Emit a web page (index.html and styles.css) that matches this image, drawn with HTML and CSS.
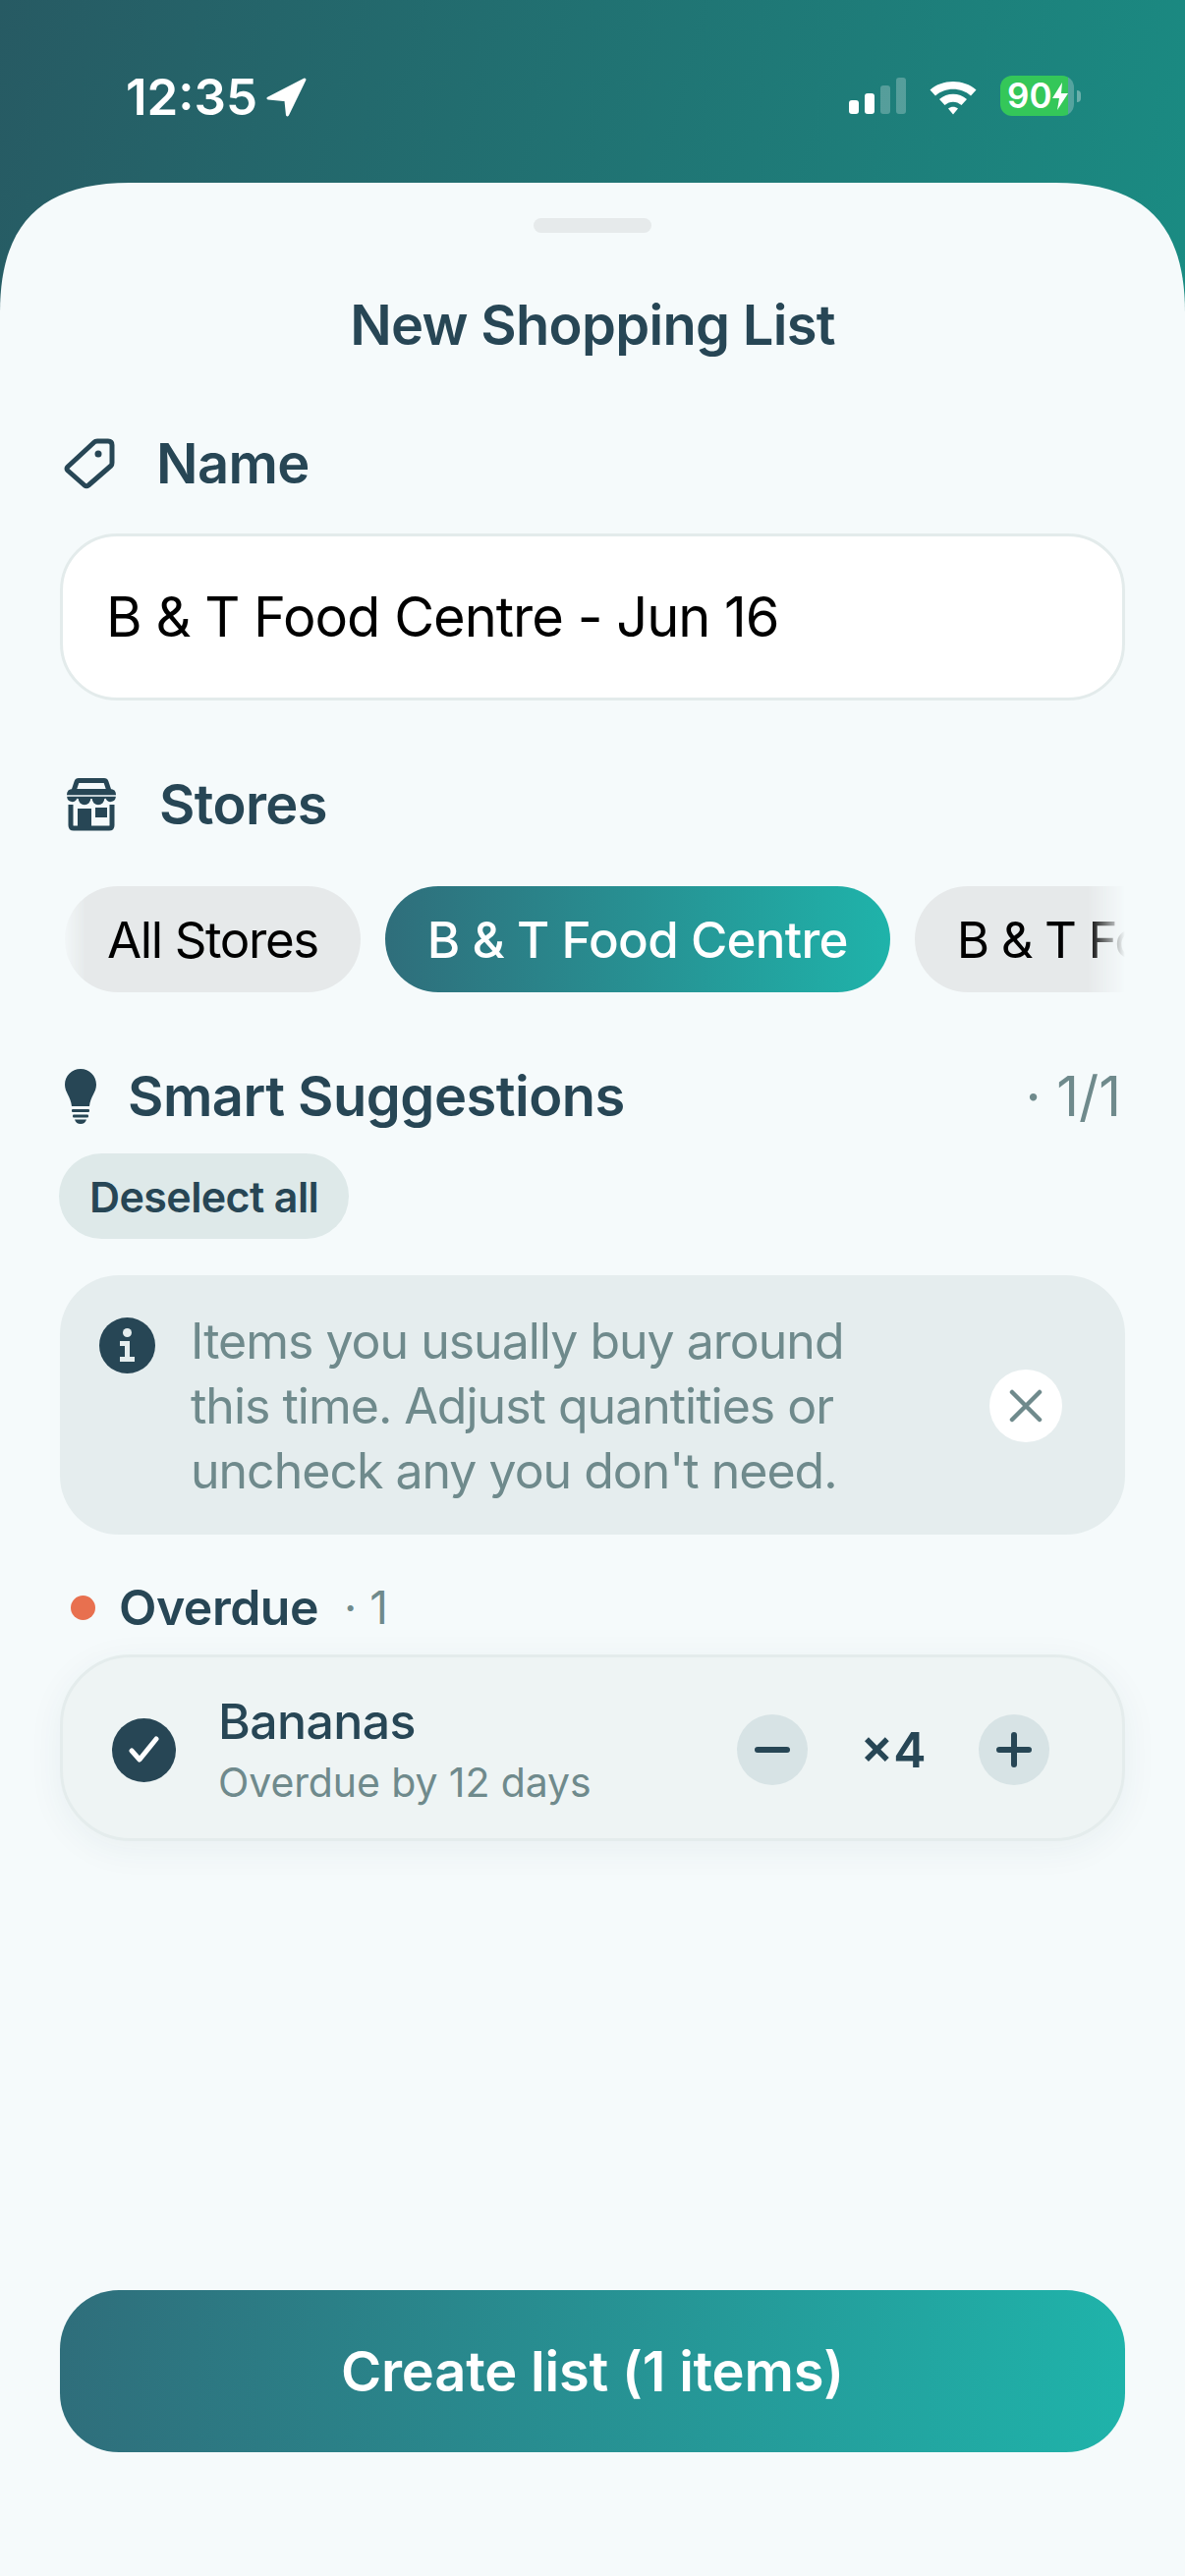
FILE: index.html
```html
<!DOCTYPE html>
<html lang="en">
  <head>
    <meta charset="UTF-8" />
    <meta name="viewport" content="width=device-width, initial-scale=1.0" />
    <title>New Shopping List</title>
    <link rel="stylesheet" href="styles.css">
  </head>
  <body>
    <div class="screen">
      <div class="status-bar">
        <div class="status-left">
          <span class="time">12:35</span>
          <svg class="location" viewBox="0 0 40 38"><path d="M37 2 2 20 19 21.500 20.500 36Z" fill="#fff" stroke="#fff" stroke-width="3" stroke-linejoin="round"/></svg>
        </div>
        <div class="status-right">
          <div class="signal">
            <span class="bar bar-1"></span>
            <span class="bar bar-2"></span>
            <span class="bar bar-3 off"></span>
            <span class="bar bar-4 off"></span>
          </div>
          <svg class="wifi" viewBox="0 0 50 38">
            <path d="M1.500 12.500C14 1 36 1 48.500 12.500L43 18.500C33.500 9.500 16.500 9.500 7 18.500Z" fill="#fff"/>
            <path d="M11 22C19 15 31 15 39 22L33.500 28C28.500 23.500 21.500 23.500 16.500 28Z" fill="#fff"/>
            <path d="M20 31.500C23 29 27 29 30 31.500L25 37.500Z" fill="#fff"/>
          </svg>
          <div class="battery">
            <div class="battery-body">
              <span class="battery-level">90</span>
              <svg class="bolt" viewBox="0 0 16 28"><path d="M10 0 0 16H7L5 28 16 11H9Z" fill="#fff"/></svg>
            </div>
            <span class="battery-tip"></span>
          </div>
        </div>
      </div>

      <div class="sheet">
        <div class="handle"></div>
        <h1 class="sheet-title">New Shopping List</h1>

        <div class="section-label name-label">
          <svg class="tag-icon" viewBox="0 0 56 56">
            <path d="M5 31 32 6Q33 5 35 5H46Q50 5 50 9V27Q50 29 49 30L26 50Q24 51.500 22 50L5 35Q3 33 5 31Z" fill="none" stroke="#274655" stroke-width="5" stroke-linejoin="round"/>
            <circle cx="36" cy="18" r="3.500" fill="#274655"/>
          </svg>
          <span>Name</span>
        </div>
        <div class="name-input">B &amp; T Food Centre - Jun 16</div>

        <div class="section-label stores-label">
          <svg class="store-icon" viewBox="0 0 54 54">
            <path d="M9 13 12 4Q12.500 2.500 14 2.500H40Q41.500 2.500 42 4L45 13" fill="none" stroke="#274655" stroke-width="5"/>
            <path d="M2 17Q2 11 8 11H46Q52 11 52 17V19H2Z" fill="#274655"/>
            <path d="M1.500 18H52.500V20A6 6 0 0 1 41 21 7 7 0 0 1 27 21 7 7 0 0 1 13 21 6 6 0 0 1 1.500 20Z" fill="#274655" stroke="#f5fafb" stroke-width="1.500"/>
            <path d="M6 27V48Q6 51 9 51H45Q48 51 48 48V27" fill="none" stroke="#274655" stroke-width="5"/>
            <rect x="13" y="31" width="14" height="20" fill="#274655"/>
            <rect x="31" y="30" width="12" height="10" fill="#274655"/>
          </svg>
          <span>Stores</span>
        </div>
        <div class="chip-row">
          <div class="chip">All Stores</div>
          <div class="chip chip-active">B &amp; T Food Centre</div>
          <div class="chip">B &amp; T Food Centre</div>
        </div>

        <div class="suggest-head">
          <svg class="bulb-icon" viewBox="0 0 32 56">
            <path d="M16 0C7 0 0 7 0 16 0 24 6 28 7 38H25C26 28 32 24 32 16 32 7 25 0 16 0Z" fill="#274655"/>
            <rect x="7" y="41" width="18" height="3" rx="1" fill="#274655"/>
            <rect x="8" y="46.500" width="16" height="3" rx="1" fill="#274655"/>
            <path d="M10 51.500H22C21 54.500 19 56 16 56 13 56 11 54.500 10 51.500Z" fill="#274655"/>
          </svg>
          <span class="suggest-title">Smart Suggestions</span>
          <span class="suggest-count">· 1/1</span>
        </div>
        <div class="pill">Deselect all</div>

        <div class="info-box">
          <svg class="info-icon" viewBox="0 0 57 57">
            <circle cx="28.500" cy="28.500" r="28.500" fill="#274655"/>
            <circle cx="28.500" cy="15.500" r="4.500" fill="#e5edee"/>
            <path d="M21 24H31V40H36V45H21V40H26V29H21Z" fill="#e5edee"/>
          </svg>
          <p class="info-text">Items you usually buy around<br>this time. Adjust quantities or<br>uncheck any you don't need.</p>
          <div class="info-close">
            <svg viewBox="0 0 34 34"><path d="M3 3 31 31M31 3 3 31" stroke="#6f8a8c" stroke-width="4.500" stroke-linecap="round"/></svg>
          </div>
        </div>

        <div class="group-head">
          <span class="group-dot"></span>
          <span class="group-title">Overdue</span>
          <span class="group-count">· 1</span>
        </div>

        <div class="item-card">
          <div class="item-check">
            <svg viewBox="0 0 65 65"><path d="M20 33 28 42 45 21" fill="none" stroke="#fff" stroke-width="5" stroke-linecap="round" stroke-linejoin="round"/></svg>
          </div>
          <div class="item-info">
            <div class="item-name">Bananas</div>
            <div class="item-note">Overdue by 12 days</div>
          </div>
          <div class="stepper">
            <div class="step-btn">
              <svg viewBox="0 0 72 72"><path d="M21 36H51" stroke="#274655" stroke-width="6" stroke-linecap="round"/></svg>
            </div>
            <span class="qty">×4</span>
            <div class="step-btn">
              <svg viewBox="0 0 72 72"><path d="M21 36H51M36 21V51" stroke="#274655" stroke-width="6" stroke-linecap="round"/></svg>
            </div>
          </div>
        </div>

        <div class="create-btn">Create list (1 items)</div>
      </div>
    </div>
  </body>
</html>
```

FILE: styles.css
```css
body {
  font-family: Inter, 'Noto Sans', sans-serif;
  margin: 0;
  padding: 0;
  background: #f5fafb;
  color: #274655;
}

.screen {
  width: 1206px;
  height: 2622px;
  display: flex;
  flex-direction: column;
  overflow: hidden;
  background: linear-gradient(105deg, #275a63 0%, #1a8c83 100%) 0 0 / 100% 340px no-repeat;
}

/* status bar */
.status-bar {
  height: 186px;
  flex-shrink: 0;
  box-sizing: border-box;
  padding: 77px 106px 0 128px;
  display: flex;
  justify-content: space-between;
  align-items: flex-start;
  color: #fff;
}

.status-left {
  display: flex;
  align-items: center;
  gap: 9px;
  margin-top: 2px;
}

.time {
  font-size: 51px;
  font-weight: 600;
  line-height: 40px;
}

.location {
  width: 42px;
  height: 40px;
}

.status-right {
  display: flex;
  align-items: center;
  gap: 23px;
  height: 41px;
}

.signal {
  display: flex;
  align-items: flex-end;
  gap: 6px;
  height: 37px;
}

.bar {
  width: 10px;
  border-radius: 3px;
  background: #fff;
}

.bar.off {
  background: rgba(255, 255, 255, 0.25);
}

.bar-1 { height: 14px; }
.bar-2 { height: 21px; }
.bar-3 { height: 29px; }
.bar-4 { height: 37px; }

.wifi {
  width: 50px;
  height: 38px;
}

.battery {
  display: flex;
  align-items: center;
  gap: 3px;
}

.battery-body {
  width: 75px;
  height: 41px;
  box-sizing: border-box;
  padding-left: 7px;
  border-radius: 12px;
  display: flex;
  align-items: center;
  gap: 1px;
  background: linear-gradient(90deg, #34c759 92%, rgba(255, 255, 255, 0.25) 92%);
}

.battery-level {
  font-size: 35px;
  font-weight: 600;
  line-height: 41px;
  color: #fff;
}

.bolt {
  width: 16px;
  height: 28px;
}

.battery-tip {
  width: 4px;
  height: 12px;
  border-radius: 0 6px 6px 0;
  background: rgba(255, 255, 255, 0.35);
}

/* sheet */
.sheet {
  flex-grow: 1;
  box-sizing: border-box;
  padding: 36px 61px 126px;
  display: flex;
  flex-direction: column;
  background: #f5fafb;
  clip-path: path('M0 132C0 42 42 0 132 0H1074C1164 0 1206 42 1206 132V2436H0Z');
}

.handle {
  align-self: center;
  width: 120px;
  height: 15px;
  border-radius: 8px;
  background: #e6eaeb;
}

.sheet-title {
  margin: 60px 0 0;
  font-size: 56px;
  line-height: 68px;
  font-weight: 600;
  letter-spacing: -0.7px;
  text-align: center;
}

.section-label {
  display: flex;
  align-items: center;
  font-size: 56px;
  line-height: 68px;
  font-weight: 600;
  letter-spacing: -0.6px;
}

.name-label {
  margin-top: 73px;
  gap: 39px;
  padding-left: 3px;
}

.tag-icon {
  width: 56px;
  height: 56px;
}

.name-input {
  margin-top: 37px;
  height: 170px;
  box-sizing: border-box;
  padding-left: 44px;
  display: flex;
  align-items: center;
  background: #fff;
  border: 3px solid #e3ebeb;
  border-radius: 58px;
  font-size: 56px;
  letter-spacing: -1px;
  color: #000;
}

.stores-label {
  margin-top: 72px;
  gap: 42px;
  padding-left: 5px;
}

.store-icon {
  width: 54px;
  height: 54px;
}

.chip-row {
  margin-top: 49px;
  padding-left: 5px;
  display: flex;
  gap: 25px;
  overflow: hidden;
  -webkit-mask-image: linear-gradient(90deg, transparent 0, #000 26px, #000 1046px, transparent 1084px);
  mask-image: linear-gradient(90deg, transparent 0, #000 26px, #000 1046px, transparent 1084px);
}

.chip {
  flex-shrink: 0;
  height: 108px;
  padding: 0 43px;
  display: flex;
  align-items: center;
  border-radius: 54px;
  background: #e6e9ea;
  font-size: 51px;
  letter-spacing: -1.4px;
  color: #000;
}

.chip-active {
  background: linear-gradient(90deg, #2f6e7b 0%, #1fb3aa 100%);
  color: #fff;
  font-weight: 500;
  letter-spacing: -0.7px;
}

.suggest-head {
  margin-top: 72px;
  display: flex;
  align-items: center;
  padding-left: 5px;
  height: 68px;
}

.bulb-icon {
  width: 32px;
  height: 56px;
}

.suggest-title {
  margin-left: 32px;
  font-size: 56px;
  line-height: 68px;
  font-weight: 600;
  letter-spacing: -0.5px;
}

.suggest-count {
  margin-left: auto;
  padding-right: 4px;
  font-size: 56px;
  color: #6f8a8c;
}

.pill {
  margin-top: 24px;
  align-self: flex-start;
  height: 87px;
  padding: 0 31px;
  margin-left: -1px;
  display: flex;
  align-items: center;
  border-radius: 44px;
  background: #dee9e9;
  font-size: 43px;
  font-weight: 600;
  letter-spacing: -0.6px;
}

.info-box {
  margin-top: 37px;
  height: 264px;
  box-sizing: border-box;
  padding: 43px 64px 0 40px;
  display: flex;
  align-items: flex-start;
  background: #e5edee;
  border-radius: 60px;
}

.info-icon {
  width: 57px;
  height: 57px;
  flex-shrink: 0;
}

.info-text {
  margin: -9px 0 0 36px;
  flex-grow: 1;
  font-size: 50px;
  line-height: 66px;
  letter-spacing: -1px;
  color: #6f8a8c;
}

.info-close {
  width: 74px;
  height: 74px;
  flex-shrink: 0;
  margin-top: 53px;
  display: flex;
  align-items: center;
  justify-content: center;
  border-radius: 50%;
  background: #fff;
}

.info-close svg {
  width: 34px;
  height: 34px;
}

.group-head {
  margin-top: 44px;
  padding-left: 11px;
  height: 60px;
  display: flex;
  align-items: center;
}

.group-dot {
  width: 25px;
  height: 25px;
  border-radius: 50%;
  background: #e8704f;
}

.group-title {
  margin-left: 24px;
  font-size: 50px;
  font-weight: 600;
  letter-spacing: -0.5px;
}

.group-count {
  margin-left: 26px;
  font-size: 46px;
  color: #6f8a8c;
}

.item-card {
  margin-top: 18px;
  height: 190px;
  box-sizing: border-box;
  padding: 4px 74px 0 50px;
  display: flex;
  align-items: center;
  background: #eef4f4;
  border: 3px solid #e4ecec;
  border-radius: 72px;
  box-shadow: 0 8px 36px rgba(39, 70, 85, 0.06);
}

.item-check {
  width: 65px;
  height: 65px;
  flex-shrink: 0;
  border-radius: 50%;
  background: #274655;
}

.item-check svg {
  display: block;
}

.item-info {
  margin: -2px 0 0 43px;
  flex-grow: 1;
}

.item-name {
  font-size: 50px;
  line-height: 62px;
  font-weight: 500;
  letter-spacing: -0.6px;
}

.item-note {
  margin-top: 5px;
  font-size: 41px;
  line-height: 52px;
  letter-spacing: -0.1px;
  color: #6f8a8c;
}

.stepper {
  display: flex;
  align-items: center;
}

.step-btn {
  width: 72px;
  height: 72px;
  border-radius: 50%;
  background: #d7e3e5;
}

.step-btn svg {
  display: block;
}

.qty {
  width: 174px;
  text-align: center;
  font-size: 50px;
  font-weight: 600;
}

.create-btn {
  margin-top: auto;
  height: 165px;
  display: flex;
  align-items: center;
  justify-content: center;
  border-radius: 60px;
  background: linear-gradient(90deg, #2f6e7b 0%, #1fb3aa 100%);
  color: #fff;
  font-size: 56px;
  font-weight: 600;
  letter-spacing: -0.2px;
}
```
